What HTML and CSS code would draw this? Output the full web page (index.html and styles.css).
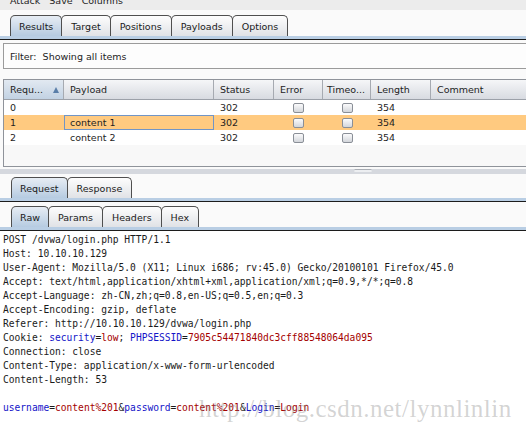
FILE: index.html
```html
<!DOCTYPE html>
<html>
<head>
<meta charset="utf-8">
<title>Intruder attack results</title>
<link rel="stylesheet" href="styles.css">
</head>
<body>
<div class="app">
  <div class="menubar">
    <div class="menu-items"><span>Attack</span><span>Save</span><span>Columns</span></div>
  </div>

  <div class="tabbar top">
    <div class="tab active">Results</div>
    <div class="tab">Target</div>
    <div class="tab">Positions</div>
    <div class="tab">Payloads</div>
    <div class="tab">Options</div>
  </div>
  <div class="tabrule"></div>

  <div class="filter">Filter:  Showing all items</div>

  <div class="table">
    <div class="row head">
      <div class="cell sorted"><span>Requ...</span><span class="arrow"></span></div>
      <div class="cell">Payload</div>
      <div class="cell">Status</div>
      <div class="cell">Error</div>
      <div class="cell narrow">Timeo...</div>
      <div class="cell">Length</div>
      <div class="cell">Comment</div>
    </div>
    <div class="row">
      <div class="cell">0</div>
      <div class="cell"></div>
      <div class="cell">302</div>
      <div class="cell chk-cell"><span class="chk"></span></div>
      <div class="cell chk-cell"><span class="chk"></span></div>
      <div class="cell">354</div>
      <div class="cell"></div>
    </div>
    <div class="row sel">
      <div class="cell">1</div>
      <div class="cell focus">content 1</div>
      <div class="cell">302</div>
      <div class="cell chk-cell"><span class="chk"></span></div>
      <div class="cell chk-cell"><span class="chk"></span></div>
      <div class="cell">354</div>
      <div class="cell"></div>
    </div>
    <div class="row">
      <div class="cell">2</div>
      <div class="cell">content 2</div>
      <div class="cell">302</div>
      <div class="cell chk-cell"><span class="chk"></span></div>
      <div class="cell chk-cell"><span class="chk"></span></div>
      <div class="cell">354</div>
      <div class="cell"></div>
    </div>
  </div>

  <div class="splitter"><div class="grip"></div></div>

  <div class="tabbar lower">
    <div class="tab active">Request</div>
    <div class="tab">Response</div>
  </div>
  <div class="tabrule"></div>

  <div class="tabbar sub">
    <div class="tab active">Raw</div>
    <div class="tab">Params</div>
    <div class="tab">Headers</div>
    <div class="tab">Hex</div>
  </div>
  <div class="tabrule"></div>

<pre class="editor">POST /dvwa/login.php HTTP/1.1
Host: 10.10.10.129
User-Agent: Mozilla/5.0 (X11; Linux i686; rv:45.0) Gecko/20100101 Firefox/45.0
Accept: text/html,application/xhtml+xml,application/xml;q=0.9,*/*;q=0.8
Accept-Language: zh-CN,zh;q=0.8,en-US;q=0.5,en;q=0.3
Accept-Encoding: gzip, deflate
Referer: http://10.10.10.129/dvwa/login.php
Cookie: <span class="k">security</span>=<span class="v">low</span>; <span class="k">PHPSESSID</span>=<span class="v">7905c54471840dc3cff88548064da095</span>
Connection: close
Content-Type: application/x-www-form-urlencoded
Content-Length: 53

<span class="k">username</span>=<span class="v">content%201</span>&amp;<span class="k">password</span>=<span class="v">content%201</span>&amp;<span class="k">Login</span>=<span class="v">Login</span></pre>

  <div class="watermark">http://blog.csdn.net/lynnlinlin</div>
</div>
</body>
</html>
```

FILE: styles.css
```css
* { box-sizing: border-box; }

html, body {
  margin: 0;
  padding: 0;
}

body {
  width: 526px;
  height: 432px;
  overflow: hidden;
  background: #fafafa;
  font-family: "DejaVu Sans", sans-serif;
  font-size: 9.5px;
  color: #1e1e1e;
}

.app {
  position: relative;
  height: 432px;
  overflow: hidden;
}

/* menu bar (cut off at the top) */
.menubar {
  height: 10px;
  background: #ececec;
  overflow: hidden;
}

.menu-items {
  display: flex;
  gap: 9px;
  padding-left: 10px;
  margin-top: -5px;
  line-height: 11px;
}

/* tabs */
.tabbar {
  display: flex;
  align-items: flex-end;
  height: 21px;
  padding-left: 10px;
}

.tabbar.top { margin-top: 5px; }
.tabbar.lower { margin-top: 3px; padding-left: 11px; }
.tabbar.sub { margin-top: 4px; padding-left: 11px; }

.tab {
  height: 21px;
  padding: 1px 9px 0;
  line-height: 19px;
  border: 1px solid #4f4f4f;
  border-bottom: none;
  border-radius: 5px 5px 0 0;
  background: linear-gradient(#fdfdfd, #e0e2e6);
  margin-left: -1px;
  white-space: nowrap;
  color: #1a1a1a;
}

.tab:first-child { margin-left: 0; padding-left: 8px; padding-right: 8px; }

.tab.active {
  background: linear-gradient(#e7edf4, #b6cbe1);
}

.tabrule {
  height: 4px;
  background: #b9cee4;
  border-bottom: 1px solid #1c1c1c;
}

/* filter */
.filter {
  margin: 3px -4px 0 3px;
  height: 26px;
  padding: 1px 6px 0;
  line-height: 23px;
  border: 1px solid #9b9b9b;
  background: #fdfdfd;
  white-space: pre;
}

/* results table */
.table {
  margin: 10px -4px 0 3px;
  height: 88px;
  border: 1px solid #8f939a;
  background: #f8f8f8;
  overflow: hidden;
}

.row {
  display: grid;
  grid-template-columns: 60px 150px 60px 49px 48px 60px 1fr;
  height: 15px;
  background: #ffffff;
}

.row.head {
  height: 20px;
  background: linear-gradient(#f5f6f8, #d8dbe1);
  border-bottom: 1px solid #9ca1a9;
}

.row.sel { background: #ffca80; }

.cell {
  padding-left: 6px;
  line-height: 15px;
  white-space: nowrap;
  overflow: hidden;
}

.head .cell {
  line-height: 19px;
  border-right: 1px solid #a6aab1;
}

.head .cell.narrow { padding-left: 4px; }

.head .cell.sorted {
  display: flex;
  justify-content: space-between;
  align-items: center;
  padding-right: 4px;
  background: linear-gradient(#e2e9f1, #c2d2e3);
}

.arrow {
  width: 0;
  height: 0;
  border-left: 3.5px solid transparent;
  border-right: 3.5px solid transparent;
  border-bottom: 6px solid #5a7ea8;
}

.cell.focus {
  border: 1px solid #7195c6;
  padding-left: 5px;
  line-height: 13px;
}

.cell.chk-cell {
  display: flex;
  justify-content: center;
  align-items: center;
  padding: 0;
}

.chk {
  width: 11px;
  height: 10px;
  border: 1px solid #8a8f97;
  border-radius: 2px;
  background: linear-gradient(#fbfbfc, #d3d6db);
}

/* splitter */
.splitter {
  display: flex;
  margin-top: 2px;
  height: 5px;
  padding-left: 354px;
  background: #d5d8de;
}

.grip {
  width: 18px;
  height: 3px;
  border-top: 1px solid #a9adb4;
  border-radius: 2px;
  background: #eceef1;
}

/* raw request editor */
.editor {
  margin: 0;
  height: 201px;
  padding: 2px 3px 0;
  background: #ffffff;
  font-family: "DejaVu Sans Mono", monospace;
  font-size: 9.6px;
  line-height: 14px;
  color: #1a1a1a;
}

.k { color: #1414c8; }
.v { color: #a40000; }

.watermark {
  position: absolute;
  left: 199px;
  top: 396px;
  font-family: "Liberation Serif", serif;
  font-size: 25px;
  letter-spacing: 0.5px;
  line-height: 1;
  color: rgba(130, 130, 130, 0.35);
  white-space: nowrap;
  pointer-events: none;
}
```
